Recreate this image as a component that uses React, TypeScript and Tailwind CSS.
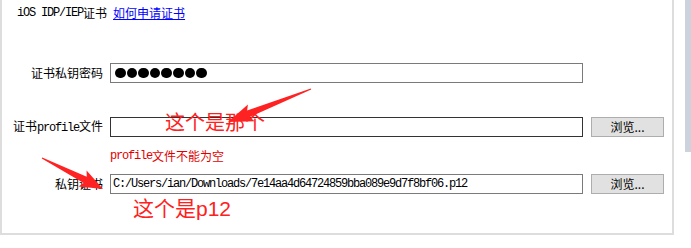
import React from "react";

const cjk = "font-['Noto_Sans_CJK_SC',sans-serif]";
const lat = "font-['Liberation_Mono',monospace] text-[12px] tracking-[-1.2px]";

// polygon for a screenshot-tool style arrow, tail -> tip
function arrow(tx: number, ty: number, hx: number, hy: number, head = 22, wing = 8, shaft = 3) {
  const dx = hx - tx;
  const dy = hy - ty;
  const len = Math.hypot(dx, dy);
  const ux = dx / len;
  const uy = dy / len;
  const nx = -uy;
  const ny = ux;
  const bx = hx - ux * head;
  const by = hy - uy * head;
  const wx = hx - ux * (head + 3);
  const wy = hy - uy * (head + 3);
  const p = [
    [tx + nx * 0.5, ty + ny * 0.5],
    [bx + nx * shaft, by + ny * shaft],
    [wx + nx * wing, wy + ny * wing],
    [hx, hy],
    [wx - nx * wing, wy - ny * wing],
    [bx - nx * shaft, by - ny * shaft],
    [tx - nx * 0.5, ty - ny * 0.5],
  ];
  return p.map((q) => q.join(",")).join(" ");
}

const Label: React.FC<{ children: React.ReactNode }> = ({ children }) => (
  <div className={`w-[101px] text-right text-[12px] text-black ${cjk}`}>{children}</div>
);

const Browse: React.FC = () => (
  <button className={`ml-[8px] w-[73px] h-[20px] border border-[#adadad] bg-[#e1e1e1] text-[12px] text-black ${cjk}`}>
    浏览...
  </button>
);

const App: React.FC = () => {
  return (
    <div className="relative w-[691px] h-[248px] bg-white flex overflow-hidden">
      {/* panel */}
      <div className="w-[674px] h-[235px] border-l-2 border-r-2 border-b-2 border-[#dddddd] flex flex-col">
        <div className="mt-[6px] h-[14px] pl-[15px] flex items-center text-[12px] text-black">
          <span className={lat}>iOS IDP/IEP</span>
          <span className={cjk}>证书</span>
          <a className={`ml-[6px] text-[#0000ff] underline ${cjk}`} href="#">
            如何申请证书
          </a>
        </div>

        <div className="mt-[43px] h-[20px] flex items-center">
          <Label>证书私钥密码</Label>
          <div className="ml-[7px] w-[473px] h-[20px] border border-[#7a7a7a] flex items-center gap-[1px] pl-[4px]">
            {Array.from({ length: 8 }).map((_, i) => (
              <span key={i} className="w-[10.6px] h-[10.6px] rounded-full bg-black" />
            ))}
          </div>
        </div>

        <div className="mt-[34px] h-[20px] flex items-center">
          <Label>
            证书<span className={lat}>profile</span>文件
          </Label>
          <div className="ml-[7px] w-[473px] h-[20px] border border-[#333333]" />
          <Browse />
        </div>

        <div className="mt-[12px] h-[14px] pl-[108px] flex items-center text-[12px] text-[#e00000]">
          <span className={lat}>profile</span>
          <span className={cjk}>文件不能为空</span>
        </div>

        <div className="mt-[11px] h-[20px] flex items-center">
          <Label>私钥证书</Label>
          <div className={`ml-[7px] w-[473px] h-[20px] border border-[#7a7a7a] flex items-center pl-[2px] text-black ${lat}`}>
            C:/Users/ian/Downloads/7e14aa4d64724859bba089e9d7f8bf06.p12
          </div>
          <Browse />
        </div>
      </div>

      {/* scrollbar strip */}
      <div className="ml-[11px] w-[6px] h-[152px] bg-[#cdd3dd]" />

      {/* annotations */}
      <div className={`absolute left-[165px] top-[108px] text-[20px] leading-[28px] text-[#ff2020] ${cjk}`}>这个是那个</div>
      <div className={`absolute left-[133px] top-[193px] text-[21px] leading-[28px] text-[#ff2020] ${cjk}`}>
        这个是<span className="font-['Liberation_Sans',sans-serif]">p12</span>
      </div>
      <svg className="absolute left-0 top-0 pointer-events-none" width="691" height="248">
        <polygon points={arrow(311, 89, 228, 122, 22, 9, 3.5)} fill="#ff2222" />
        <polygon points={arrow(42, 158, 103, 189, 20, 9, 3.5)} fill="#ff2222" />
      </svg>
    </div>
  );
};

export default App;
